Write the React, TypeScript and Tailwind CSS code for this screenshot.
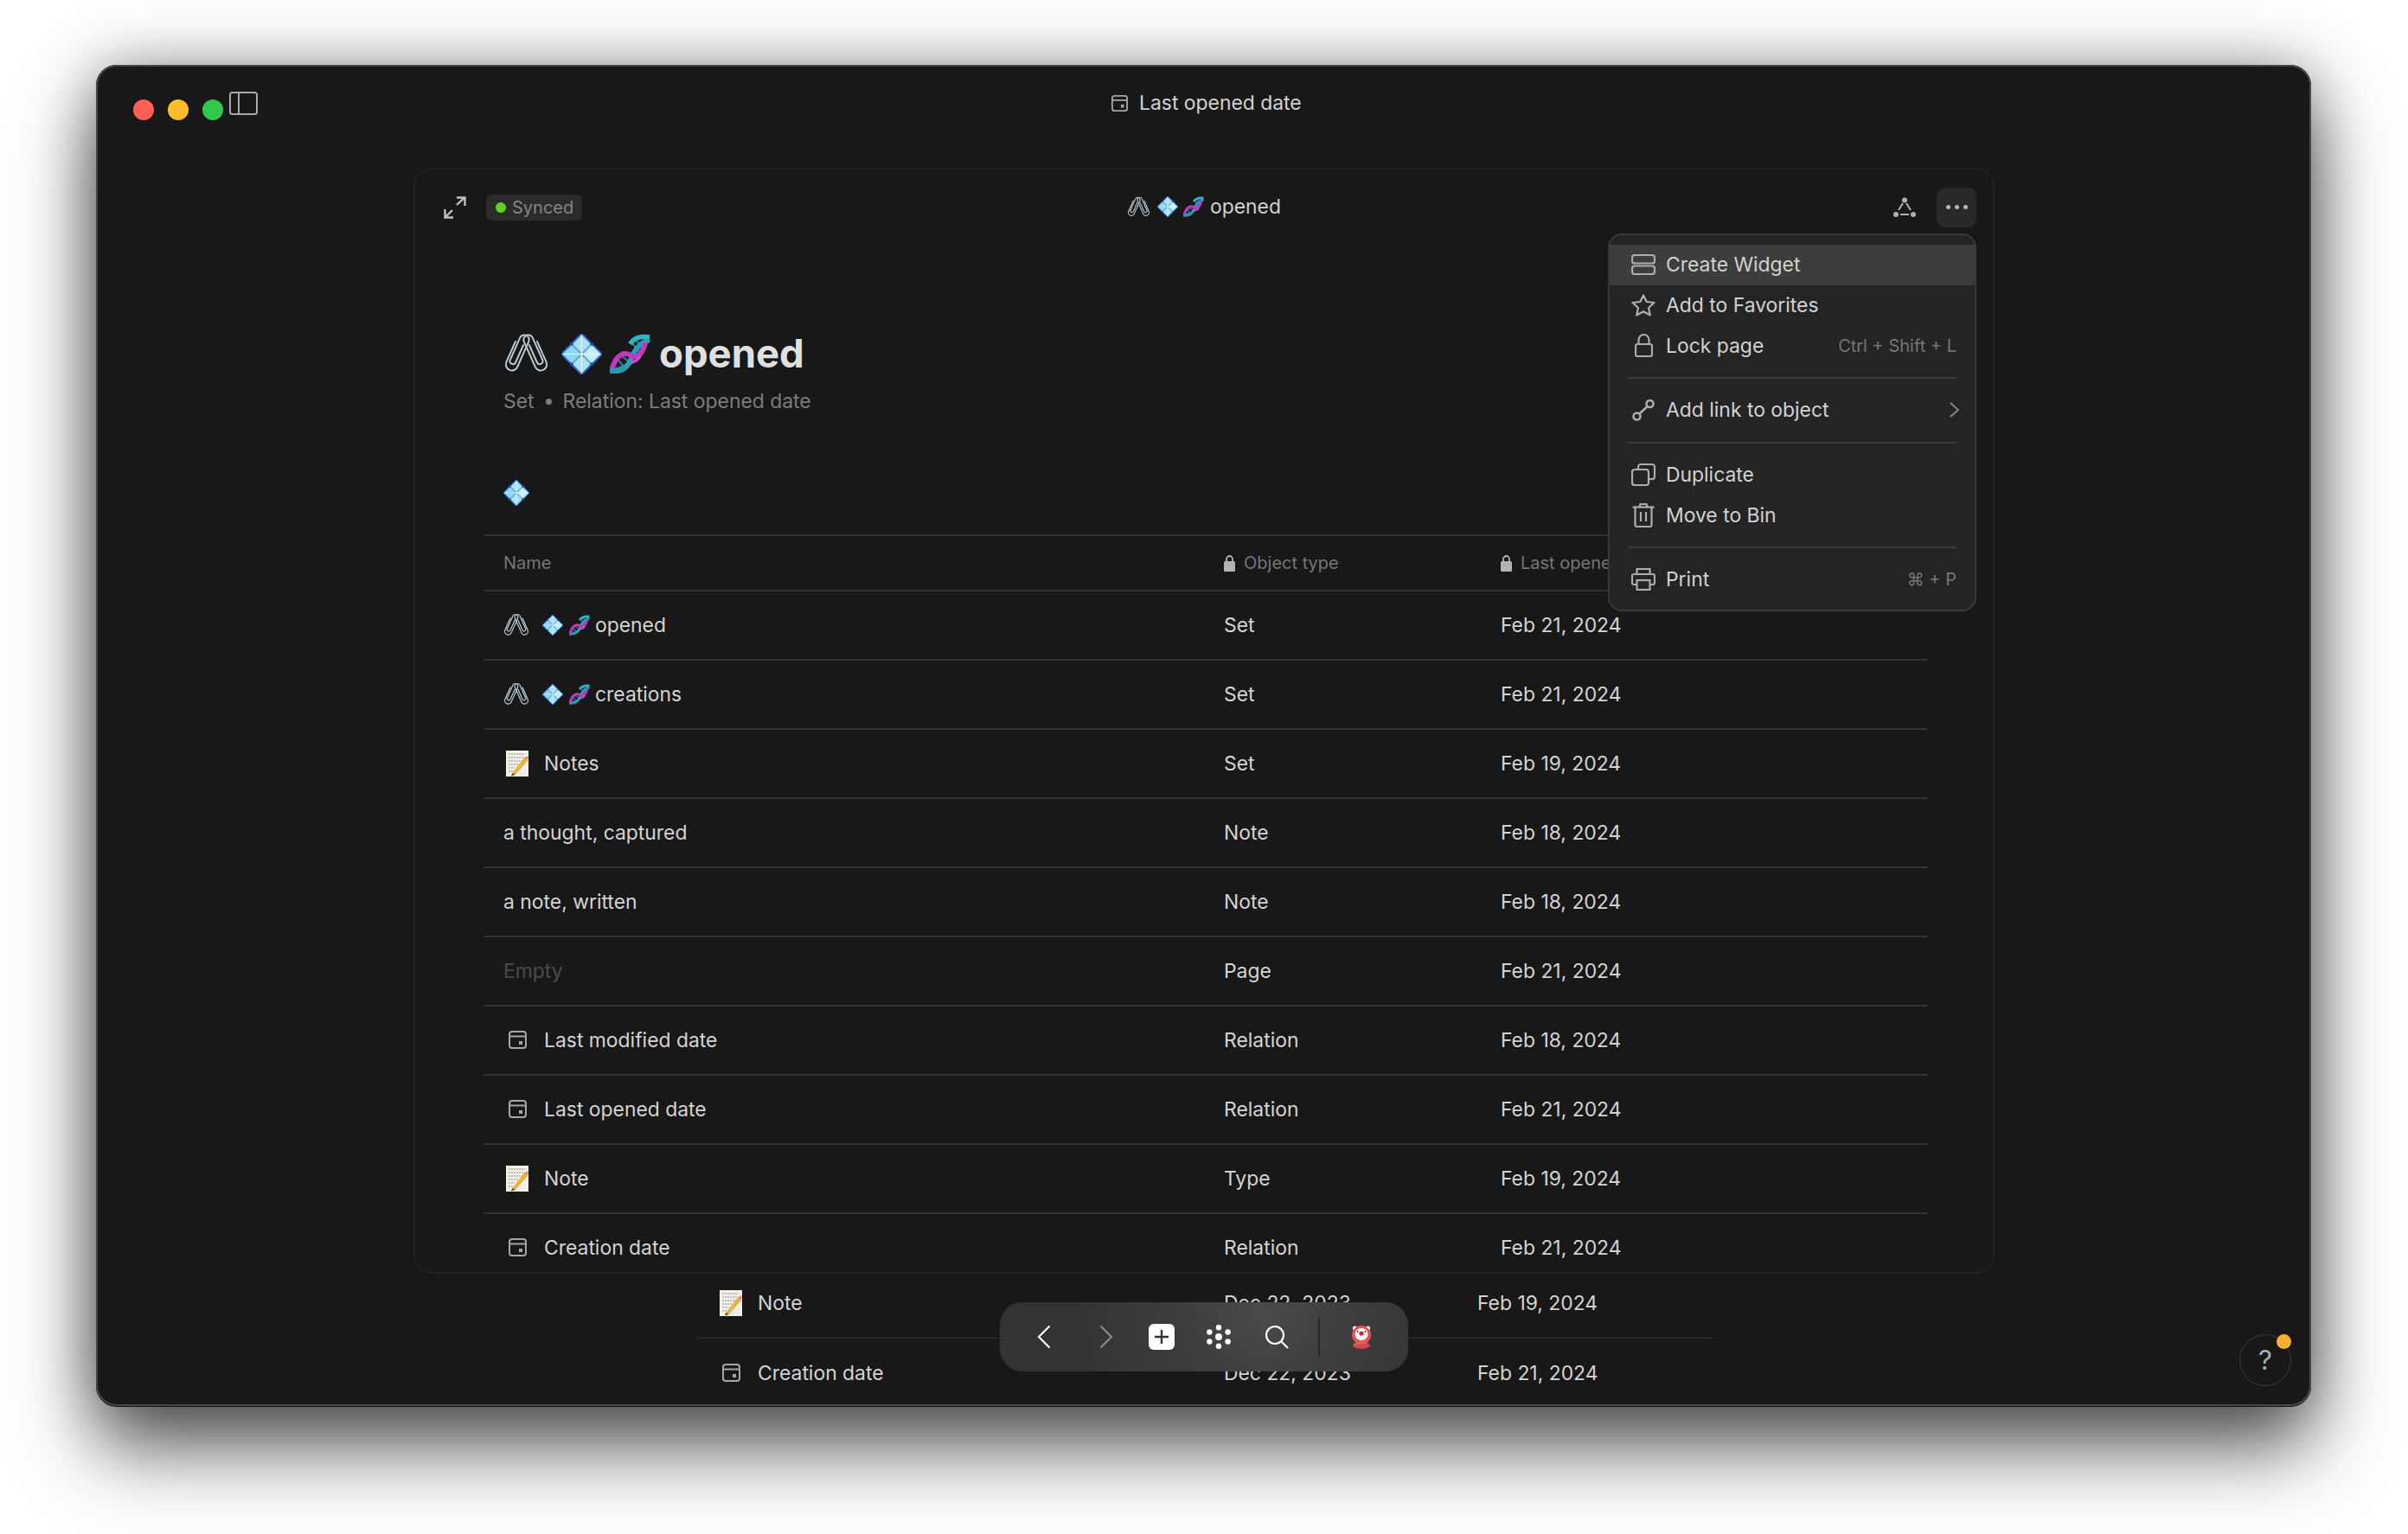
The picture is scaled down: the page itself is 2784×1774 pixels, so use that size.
import React from "react";

const clipLeft = "M9 14 V40 a7 7 0 0 0 14 0 V8 a5.5 5.5 0 0 0 -11 0 V36 a3.5 3.5 0 0 0 7 0 V14";
const clipRight = "M44 14 V40 a7 7 0 0 1 -14 0 V8 a5.5 5.5 0 0 1 11 0 V36 a3.5 3.5 0 0 1 -7 0 V14";

const Clip = ({ w, h }: { w: number; h: number }) => (
  <svg width={w} height={h} viewBox="0 0 53 52" fill="none" className="shrink-0">
    {[
      { t: "translate(0 1) rotate(24 16 26) translate(-1 -1)", d: clipLeft },
      { t: "translate(0 1) rotate(-24 37 26) translate(1 -1)", d: clipRight },
    ].map((c, i) => (
      <g key={i} transform={c.t}>
        <path d={c.d} stroke="#8d9aa6" strokeWidth="2.2" strokeLinecap="round" />
        <path d={c.d} stroke="#dbe6ee" strokeWidth="0.9" strokeLinecap="round" />
      </g>
    ))}
  </svg>
);

const Diamond = ({ s }: { s: number }) => (
  <svg width={s} height={s} viewBox="0 0 48 48" className="shrink-0">
    <g transform="rotate(45 24 24)">
      <rect x="6" y="6" width="36" height="36" rx="4" fill="#2a66c8" />
      <rect x="8" y="8" width="15.5" height="15.5" rx="1" fill="#a8e2fb" />
      <rect x="24.5" y="8" width="15.5" height="15.5" rx="1" fill="#c4eefd" />
      <rect x="8" y="24.5" width="15.5" height="15.5" rx="1" fill="#8fd6f8" />
      <rect x="24.5" y="24.5" width="15.5" height="15.5" rx="1" fill="#a8e2fb" />
      <path d="M8 8 L23.5 23.5 M40 8 L24.5 23.5 M8 40 L23.5 24.5 M40 40 L24.5 24.5" stroke="#e8f9ff" strokeWidth="1" />
      <path d="M24 7 V41 M7 24 H41" stroke="#6fa9c6" strokeWidth="2" />
      <circle cx="24" cy="24" r="1.8" fill="#f4f4f4" />
    </g>
    <circle cx="12" cy="12" r="2" fill="#1c4ea8" />
    <circle cx="36" cy="12" r="2" fill="#1c4ea8" />
    <circle cx="12" cy="36" r="2" fill="#1c4ea8" />
    <circle cx="36" cy="36" r="2" fill="#1c4ea8" />
  </svg>
);

const Dna = ({ s }: { s: number }) => (
  <svg width={s} height={s} viewBox="0 0 48 48" fill="none" className="shrink-0">
    <path d="M9 30 L19 41 M14 26 L26 36 M26 11 L36 22 M31 8 L40 17" stroke="#3a6f96" strokeWidth="2.4" />
    <path d="M1 43 C12 46 20 42 25 30 C28 23 32 12 47 7" stroke="#27a0b4" strokeWidth="6" />
    <path d="M24 12 C30 3 38 3 47 4" stroke="#35b4c4" strokeWidth="5.5" />
    <path d="M3 47 L3 40 C8 25 16 21 24 25 C31 29 38 27 42 10" stroke="#bf38bd" strokeWidth="6" />
    <path d="M25 34 C30 33 34 30 36 26" stroke="#cf48cf" strokeWidth="3.5" />
    <path d="M1 43 C8 44 13 43 17 39" stroke="#2b95ad" strokeWidth="6.5" />
  </svg>
);

const NoteEmoji = () => (
  <svg width="26" height="30" viewBox="0 0 26 30" className="shrink-0">
    <rect x="0" y="0" width="26" height="30" fill="#f1efe8" />
    <path d="M3 4 H22 M3 8 H20 M3 12 H22 M3 16 H15 M3 20 H10 M3 24 H8" stroke="#8e8e88" strokeWidth="1" strokeDasharray="2 1" />
    <path d="M8 26 L6 29 L10 28 L25 11 L22 8 Z" fill="#f2b631" stroke="#b07d1c" strokeWidth="0.6" />
    <path d="M6 29 L8 26 L10 28 Z" fill="#4a3a28" />
    <path d="M21.5 8.5 L23 7 Q24.5 6 25.6 7.4 Q26.4 9 25 10 L24.5 11 Z" fill="#e8848a" />
  </svg>
);

const DateIcon = ({ s = 21 }: { s?: number }) => (
  <svg width={s} height={s} viewBox="0 0 21 21" fill="none" className="shrink-0">
    <rect x="1" y="1" width="19" height="19" rx="3" stroke="#a6a6a6" strokeWidth="2" />
    <path d="M1 6.5 H20" stroke="#a6a6a6" strokeWidth="2" />
    <rect x="12" y="12" width="4" height="4" fill="#a6a6a6" />
  </svg>
);

const Lock = () => (
  <svg width="13" height="20" viewBox="0 0 13 20" className="shrink-0">
    <path d="M3 8 V5.5 a3.5 3.5 0 0 1 7 0 V8" fill="none" stroke="#b4b4b4" strokeWidth="1.8" />
    <rect x="0" y="8" width="13" height="12" rx="1.5" fill="#b4b4b4" />
  </svg>
);

const menuStroke = { stroke: "#adadad", strokeWidth: 2.2, fill: "none" };

const MenuIcons: Record<string, React.ReactNode> = {
  widget: (
    <svg width="28" height="24" viewBox="0 0 28 24" {...menuStroke}>
      <rect x="1" y="1" width="26" height="9.5" rx="3" />
      <rect x="1" y="13.5" width="26" height="9.5" rx="3" />
    </svg>
  ),
  star: (
    <svg width="28" height="26" viewBox="0 0 28 26" {...menuStroke} strokeLinejoin="round">
      <path d="M14 1.5 L17.7 9 L26.5 10 L20 16 L21.8 24.5 L14 20.2 L6.2 24.5 L8 16 L1.5 10 L10.3 9 Z" />
    </svg>
  ),
  lock: (
    <svg width="21" height="27" viewBox="0 0 21 27" {...menuStroke}>
      <rect x="1" y="12" width="19" height="14" rx="2" />
      <path d="M4.5 12 V7 a6 6 0 0 1 12 0 V12" />
    </svg>
  ),
  link: (
    <svg width="26" height="25" viewBox="0 0 26 25" {...menuStroke} strokeWidth={2.6}>
      <circle cx="5.5" cy="19.5" r="4" />
      <circle cx="20.5" cy="5" r="4" />
      <path d="M8.5 16.5 L17.5 8" />
    </svg>
  ),
  duplicate: (
    <svg width="28" height="26" viewBox="0 0 28 26" {...menuStroke}>
      <rect x="1" y="7" width="19" height="18" rx="3" />
      <path d="M8 7 V4 a3 3 0 0 1 3 -3 H24 a3 3 0 0 1 3 3 V15 a3 3 0 0 1 -3 3 H20" />
    </svg>
  ),
  bin: (
    <svg width="26" height="28" viewBox="0 0 26 28" {...menuStroke}>
      <path d="M0.5 4.5 H25.5" />
      <path d="M9 4 V2 a1 1 0 0 1 1 -1 H16 a1 1 0 0 1 1 1 V4" />
      <path d="M3.5 5 V25 a2 2 0 0 0 2 2 H20.5 a2 2 0 0 0 2 -2 V5" />
      <path d="M10 10 V21 M16 10 V21" />
    </svg>
  ),
  print: (
    <svg width="28" height="26" viewBox="0 0 28 26" {...menuStroke}>
      <path d="M6.5 7 V1 H21.5 V7" />
      <path d="M6.5 19 H3 a2 2 0 0 1 -2 -2 V9 a2 2 0 0 1 2 -2 H25 a2 2 0 0 1 2 2 V17 a2 2 0 0 1 -2 2 H21.5" />
      <rect x="6.5" y="14" width="15" height="11" />
    </svg>
  ),
};

const MenuItem = ({ icon, label, right, active, chevron }: { icon: string; label: string; right?: string; active?: boolean; chevron?: boolean }) => (
  <div className={"flex h-[46.7px] items-center pl-[25px] pr-[21px] " + (active ? "bg-[#3d3d3d]" : "")}>
    <span className="flex w-[40px] shrink-0 items-center">
      <span className="flex w-[28px] justify-center">{MenuIcons[icon]}</span>
    </span>
    <span className="text-[22.9px] text-[#d2d2d2]">{label}</span>
    {right && <span className="ml-auto text-[20px] text-[#757575]">{right}</span>}
    {chevron && (
      <svg width="11" height="18" viewBox="0 0 11 18" fill="none" className="ml-auto mr-[-3px]">
        <path d="M1 1 L10 9 L1 17" stroke="#8d8d85" strokeWidth="1.8" />
      </svg>
    )}
  </div>
);

const Sep = () => <div className="mx-[21px] my-[13px] h-[2px] bg-[#3a3a3a]" />;

type Row = { kind?: string; name: string; type: string; date: string; empty?: boolean };

const rows: Row[] = [
  { kind: "set", name: "opened", type: "Set", date: "Feb 21, 2024" },
  { kind: "set", name: "creations", type: "Set", date: "Feb 21, 2024" },
  { kind: "note", name: "Notes", type: "Set", date: "Feb 19, 2024" },
  { name: "a thought, captured", type: "Note", date: "Feb 18, 2024" },
  { name: "a note, written", type: "Note", date: "Feb 18, 2024" },
  { name: "Empty", type: "Page", date: "Feb 21, 2024", empty: true },
  { kind: "date", name: "Last modified date", type: "Relation", date: "Feb 18, 2024" },
  { kind: "date", name: "Last opened date", type: "Relation", date: "Feb 21, 2024" },
  { kind: "note", name: "Note", type: "Type", date: "Feb 19, 2024" },
  { kind: "date", name: "Creation date", type: "Relation", date: "Feb 21, 2024" },
];

const RowName = ({ r }: { r: Row }) => (
  <div className={"flex items-center " + (r.empty ? "text-[#4b4b4b]" : "text-[#d4d4d4]")}>
    {r.kind === "set" && (
      <>
        <Clip w={30} h={30} />
        <span className="ml-[15px]"><Diamond s={24} /></span>
        <span className="ml-[7px]"><Dna s={24} /></span>
        <span className="ml-[6px]">{r.name}</span>
      </>
    )}
    {r.kind === "note" && (
      <>
        <span className="ml-[3px]"><NoteEmoji /></span>
        <span className="ml-[18px]">{r.name}</span>
      </>
    )}
    {r.kind === "date" && (
      <>
        <span className="ml-[6px]"><DateIcon /></span>
        <span className="ml-[20px]">{r.name}</span>
      </>
    )}
    {!r.kind && <span>{r.name}</span>}
  </div>
);

export default function App() {
  return (
    <div className="h-[1774px] w-[2784px] overflow-hidden bg-white pl-[111px] pt-[75px] font-['Inter',sans-serif]">
      <div className="relative h-[1551px] w-[2561px] overflow-hidden rounded-[24px] bg-[#181818] shadow-[inset_0_0_0_2px_#474747,0_1px_0_0_#111111,0_50px_90px_rgba(0,0,0,0.62),0_0_70px_rgba(0,0,0,0.35)]">
        {/* title bar */}
        <div className="flex h-[119px] items-start">
          <div className="flex w-[1174px] shrink-0 items-start pl-[43px]">
            <span className="mt-[40px] h-[24px] w-[24px] rounded-full bg-[#ff5f57]" />
            <span className="ml-[16px] mt-[40px] h-[24px] w-[24px] rounded-full bg-[#febc2e]" />
            <span className="ml-[16px] mt-[40px] h-[24px] w-[24px] rounded-full bg-[#2fc84a]" />
            <svg width="33" height="27" viewBox="0 0 33 27" fill="none" className="ml-[7px] mt-[31px]">
              <rect x="1" y="1" width="31" height="25" rx="2.5" stroke="#a8a8a8" strokeWidth="2" />
              <path d="M11 1 V26" stroke="#a8a8a8" strokeWidth="2" />
            </svg>
          </div>
          <div className="mt-[29px] flex h-[30px] items-center">
            <DateIcon s={19} />
            <span className="ml-[13px] text-[22.9px] text-[#d2d2d2]">Last opened date</span>
          </div>
        </div>

        {/* foreground panel */}
        <div className="ml-[367px] h-[1279px] w-[1828px] overflow-hidden rounded-[22px] border-2 border-[#222222]">
          <div className="flex h-[87px] items-center">
            <div className="flex w-[823px] shrink-0 items-center pl-[33px]">
              <svg width="26" height="26" viewBox="0 0 26 26" fill="none">
                <path d="M1.5 15 V24.5 H11 M1.5 24.5 L10 16 M15 10 L24 1.5 M15 1.5 H24.5 V11" stroke="#c2c2c2" strokeWidth="2.4" />
              </svg>
              <div className="ml-[23px] flex h-[30px] w-[111px] items-center rounded-[6px] bg-[#2b2b2b] pl-[11px]">
                <span className="h-[12px] w-[12px] rounded-full bg-[#63d321]" />
                <span className="ml-[7px] text-[20px] text-[#858585]">Synced</span>
              </div>
            </div>
            <div className="flex items-center">
              <Clip w={27} h={27} />
              <span className="ml-[8px]"><Diamond s={24} /></span>
              <span className="ml-[6px]"><Dna s={24} /></span>
              <span className="ml-[7px] text-[22.9px] text-[#d2d2d2]">opened</span>
            </div>
            <div className="ml-auto flex items-center pr-[19px]">
              <svg width="26" height="24" viewBox="0 0 26 24" fill="none">
                <path d="M11 7 L6 15 M15 7 L20 15 M8 20 H18" stroke="#b0b0b0" strokeWidth="2" />
                <circle cx="13" cy="3.5" r="3" fill="#b0b0b0" />
                <circle cx="3" cy="20" r="3" fill="#b0b0b0" />
                <circle cx="23" cy="20" r="3" fill="#b0b0b0" />
              </svg>
              <div className="ml-[24px] flex h-[46px] w-[46px] items-center justify-center gap-[5px] rounded-[10px] bg-[#292929]">
                <span className="h-[5px] w-[5px] rounded-full bg-[#b8b8b8]" />
                <span className="h-[5px] w-[5px] rounded-full bg-[#b8b8b8]" />
                <span className="h-[5px] w-[5px] rounded-full bg-[#b8b8b8]" />
              </div>
            </div>
          </div>

          <div className="ml-[102px] mt-[91px] flex h-[70px] items-center">
            <Clip w={53} h={52} />
            <span className="ml-[14px]"><Diamond s={47} /></span>
            <span className="ml-[9px]"><Dna s={47} /></span>
            <span className="ml-[10px] text-[45.5px] font-bold leading-none text-[#e0e0e0]">opened</span>
          </div>
          <div className="ml-[102px] mt-[5px] flex h-[30px] items-center text-[22.9px] text-[#7d7d7d]">
            <span>Set</span>
            <span className="mx-[13px] h-[7px] w-[7px] rounded-full bg-[#7d7d7d]" />
            <span>Relation: Last opened date</span>
          </div>
          <div className="ml-[102px] mt-[76px]"><Diamond s={30} /></div>

          <div className="ml-[79px] mt-[33px] w-[1669px]">
            <div className="grid h-[66px] grid-cols-[856px_320px_1fr] items-center border-y-2 border-[#333333] text-[20px] text-[#767676]">
              <span className="pl-[23px]">Name</span>
              <span className="flex items-center gap-[10px]"><Lock />Object type</span>
              <span className="flex items-center gap-[10px]"><Lock />Last opened date</span>
            </div>
            {rows.map((r) => (
              <div key={r.name} className="grid h-[80px] grid-cols-[856px_320px_1fr] items-center border-b-2 border-[#333333] text-[22.9px] text-[#d4d4d4]">
                <div className="pl-[23px]"><RowName r={r} /></div>
                <span>{r.type}</span>
                <span>{r.date}</span>
              </div>
            ))}
          </div>
        </div>

        {/* page behind the panel */}
        <div className="ml-[694px] w-[1175px] text-[22.9px] text-[#d4d4d4]">
          <div className="grid h-[75px] grid-cols-[610px_293px_1fr] items-center border-b border-[#333333] pb-[6px]">
            <div className="flex items-center pl-[27px]"><NoteEmoji /><span className="ml-[18px]">Note</span></div>
            <span>Dec 22, 2023</span>
            <span>Feb 19, 2024</span>
          </div>
          <div className="grid h-[80px] grid-cols-[610px_293px_1fr] items-center">
            <div className="flex items-center pl-[30px]"><DateIcon /><span className="ml-[20px]">Creation date</span></div>
            <span>Dec 22, 2023</span>
            <span>Feb 21, 2024</span>
          </div>
        </div>

        {/* options menu */}
        <div className="absolute left-[1748px] top-[195px] w-[426px] rounded-[16px] border-2 border-[#3a3a34] bg-[#242424] py-[11px]">
          <MenuItem icon="widget" label="Create Widget" active />
          <MenuItem icon="star" label="Add to Favorites" />
          <MenuItem icon="lock" label="Lock page" right="Ctrl + Shift + L" />
          <Sep />
          <MenuItem icon="link" label="Add link to object" chevron />
          <Sep />
          <MenuItem icon="duplicate" label="Duplicate" />
          <MenuItem icon="bin" label="Move to Bin" />
          <Sep />
          <MenuItem icon="print" label="Print" right="⌘ + P" />
        </div>

        {/* floating dock */}
        <div className="absolute left-[1045px] top-[1431px] flex h-[80px] w-[472px] items-center rounded-[26px] bg-[#333333] bg-[radial-gradient(circle_at_65%_10%,#4a4a4a_0%,#3c3c3c_35%,#333333_70%)] pl-[16px]">
          <span className="flex w-[70px] justify-center">
            <svg width="16" height="28" viewBox="0 0 16 28" fill="none"><path d="M14.5 1.5 L2 14 L14.5 26.5" stroke="#ffffff" strokeWidth="2.2" /></svg>
          </span>
          <span className="flex w-[74px] justify-center">
            <svg width="16" height="28" viewBox="0 0 16 28" fill="none"><path d="M1.5 1.5 L14 14 L1.5 26.5" stroke="#8a8a8a" strokeWidth="2.2" /></svg>
          </span>
          <span className="flex w-[54px] justify-center">
            <span className="flex h-[30px] w-[30px] items-center justify-center rounded-[6px] bg-white">
              <svg width="18" height="18" viewBox="0 0 18 18"><path d="M9 1 V17 M1 9 H17" stroke="#333333" strokeWidth="2.4" /></svg>
            </span>
          </span>
          <span className="flex w-[78px] justify-center">
            <svg width="28" height="28" viewBox="0 0 28 28" fill="#ffffff">
              <circle cx="14" cy="14" r="4" />
              <circle cx="14" cy="3.2" r="3.2" />
              <circle cx="14" cy="24.8" r="3.2" />
              <circle cx="3.4" cy="8.5" r="3.2" />
              <circle cx="24.6" cy="8.5" r="3.2" />
              <circle cx="3.4" cy="19.5" r="3.2" />
              <circle cx="24.6" cy="19.5" r="3.2" />
            </svg>
          </span>
          <span className="flex w-[56px] justify-center">
            <svg width="28" height="28" viewBox="0 0 28 28" fill="none" stroke="#ffffff" strokeWidth="2.2">
              <circle cx="12" cy="12" r="10" />
              <path d="M19 19 L27 27" />
            </svg>
          </span>
          <span className="flex w-[42px] justify-center"><span className="h-[46px] w-[2px] bg-[#272727]" /></span>
          <span className="flex w-[56px] justify-center">
            <svg width="24" height="28" viewBox="0 0 24 28">
              <ellipse cx="12" cy="24" rx="10" ry="3.8" fill="#d9434f" />
              <circle cx="4.5" cy="4" r="2.6" fill="#f5f5f5" />
              <circle cx="19.5" cy="4" r="2.6" fill="#f5f5f5" />
              <circle cx="12" cy="12" r="11" fill="#e4505c" />
              <ellipse cx="12" cy="11" rx="7.5" ry="7" fill="#ffffff" />
              <circle cx="12" cy="10" r="2.6" fill="#e01f2e" />
              <circle cx="7.6" cy="8" r="0.9" fill="#222222" />
              <circle cx="16.4" cy="8" r="0.9" fill="#222222" />
              <path d="M3 23 L12 20 L16 22" stroke="#b98a2c" strokeWidth="1.6" fill="none" />
            </svg>
          </span>
        </div>

        {/* help */}
        <div className="absolute left-[2478px] top-[1468px] flex h-[60px] w-[60px] items-center justify-center rounded-full border border-[#3d3d3d] text-[31px] text-[#ababab]">
          ?
          <span className="absolute right-[-1px] top-[-1px] h-[17px] w-[17px] rounded-full bg-[#fdb034]" />
        </div>
      </div>
    </div>
  );
}
